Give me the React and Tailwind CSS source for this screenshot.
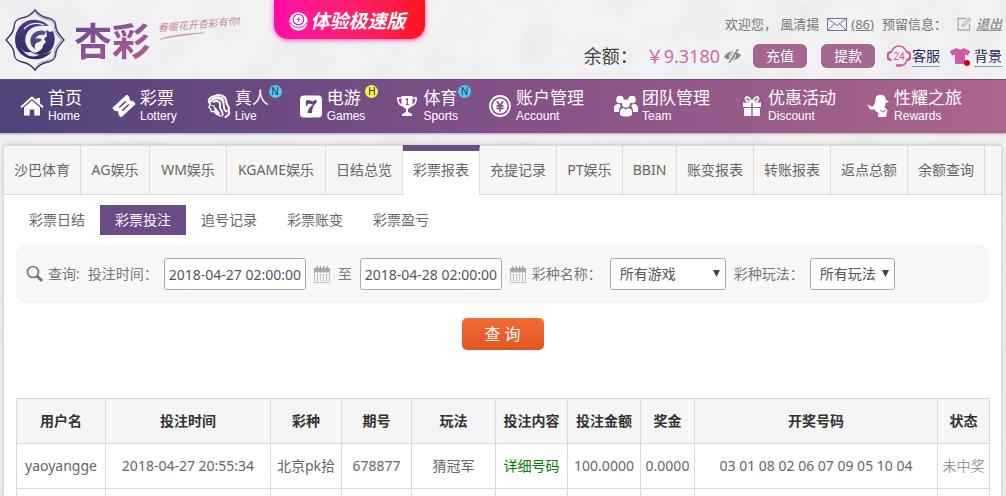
import React from "react";
import { FaTshirt } from "react-icons/fa";

const FlowerLogo = () => (
  <svg width="62" height="64" viewBox="0 0 62 64" fill="none" aria-hidden="true">
    <defs>
      <linearGradient id="emblem" x1="0" y1="0" x2="0" y2="1">
        <stop offset="0" stopColor="#4f3a80" />
        <stop offset="1" stopColor="#2f2b62" />
      </linearGradient>
    </defs>
    <path
      d="M31 2C34 6 38 9 44 10C50 11 52 14 52 20C53 25 56 28 60 32C56 36 53 39 52 44C52 50 50 53 44 54C38 55 34 58 31 62C28 58 24 55 18 54C12 53 10 50 10 44C9 39 6 36 2 32C6 28 9 25 10 20C10 14 12 11 18 10C24 9 28 6 31 2Z"
      stroke="url(#emblem)"
      strokeWidth="1.4"
    />
    <path
      d="M31 4.500C34 8 38 10.500 43 11.500C49 12.500 50.500 15 50.500 20.500C51 25 54 28.500 57.500 32C54 35.500 51 39 50.500 43.500C50.500 49 49 51.500 43 52.500C38 53.500 34 56 31 59.500"
      stroke="#6a5a92"
      strokeWidth=".6"
    />
    <path
      d="M45 18C37 10 24 10 17 17C9 25 9 39 17 46C26 54 41 53 48 43C40 48 29 47 24 40C19 33 21 24 28 20C34 17 40 18 45 18Z"
      fill="url(#emblem)"
    />
    <path d="M20 21C25 15 34 14 40 17" stroke="#eeeef2" strokeWidth="1.2" />
    <path d="M28 27C31 23 37 21 42 24L40 27C36 26 33 28 31 31C33 30 36 30 38 32L35 34C32 34 30 37 31 41C26 38 25 32 28 27Z" fill="url(#emblem)" opacity=".9" />
    <path d="M42 22L46 24L49 23C52 30 51 38 46 43C41 47 35 47 31 45C36 43 39 41 39 37L42 34L40 31L43 28Z" fill="url(#emblem)" />
    <path d="M17 39C19 44 23 45 26 44C29 44 31 48 36 46C32 50 21 50 17 39Z" fill="#e9e7f0" />
  </svg>
);

const HomeIcon = () => (
  <svg width="24" height="24" viewBox="0 0 24 24" fill="#fff" aria-hidden="true">
    <path d="M12 2.200L16.500 6.200V4H20V9.300L23.600 12.600L22.400 14L12 4.900L1.600 14L.4 12.600Z" />
    <path d="M12 6.400L20 13.400V21.500H14.300V15.500H9.700V21.500H4V13.400Z" />
  </svg>
);

const TicketIcon = () => (
  <svg width="24" height="24" viewBox="0 0 24 24" aria-hidden="true">
    <g transform="rotate(-43 12 12)">
      <path d="M2 5.500H22V9.700A2.400 2.400 0 0 0 22 14.300V18.500H2V14.300A2.400 2.400 0 0 0 2 9.700Z" fill="#fff" />
      <path d="M7.500 9.800H16.500M7.500 14.200H16.500" stroke="#56447c" strokeWidth="1.500" />
    </g>
  </svg>
);

const LadyIcon = () => (
  <svg width="26" height="26" viewBox="0 0 26 26" fill="none" stroke="#fff" strokeLinecap="round" aria-hidden="true">
    <path d="M3 10C0 6 4 3 8 2.500C14-.5 21 2 21 9C21 13 26 14 23 18C26 21 22 24 20 25" strokeWidth="2.200" />
    <path d="M4 8C8 3 15 4 17 8C20 13 16 16 21 19M7 8.500C12 6 15 9 14 13C13 17 18 18 17 23M6 5C11 2 18 3 18 9" strokeWidth="2" />
    <path d="M3.500 11L2 14.500L4 16L4.500 19L8 19L10 22L15 24" strokeWidth="1.500" />
    <path d="M8 14C11 16 11 19 14 21C12 23 9 22 9 19Z" fill="#fff" strokeWidth="1" />
    <path d="M5 12.500L8 13" strokeWidth="1.200" />
  </svg>
);

const SevenIcon = () => (
  <svg width="24" height="24" viewBox="0 0 24 24" aria-hidden="true">
    <rect x="1" y="1.500" width="22" height="22" rx="4" fill="#fff" />
    <path d="M7 6.500L8 6.500C10 5 12 8 14.500 7C15.500 6.600 16 6 16.500 5.800H17.500V8.500C14 12 13 15 13 19H8.500C8.500 15.500 11 12.500 14.500 10C12 11 10.500 8.800 8.500 10.500L8 12H6.800Z" fill="#68447f" />
  </svg>
);

const TrophyIcon = () => (
  <svg width="24" height="24" viewBox="0 0 24 24" fill="none" aria-hidden="true">
    <path d="M6.500 2H17.500V8C17.500 12 15.500 14.500 12 15C8.500 14.500 6.500 12 6.500 8Z" fill="#fff" />
    <path d="M6.500 4H2.800C2.800 9 5 11 8 11.800M17.500 4H21.200C21.200 9 19 11 16 11.800" stroke="#fff" strokeWidth="1.700" />
    <path d="M11 14H13V18L17 20V22H7V20L11 18Z" fill="#fff" />
    <path d="M10.800 5.800L12.300 4.800V10.500M10.800 10.500H13.800" stroke="#7b4d86" strokeWidth="1.200" />
  </svg>
);

const YuanIcon = () => (
  <svg width="24" height="24" viewBox="0 0 24 24" fill="none" aria-hidden="true">
    <circle cx="12" cy="12" r="10" stroke="#fff" strokeWidth="1.800" />
    <circle cx="12" cy="12" r="7.500" fill="#fff" />
    <path d="M8.700 7.300L12 11.300L15.300 7.300M8.500 11.800H15.500M8.500 14.300H15.500M12 11V17.500" stroke="#80508a" strokeWidth="1.700" />
  </svg>
);

const TeamIcon = () => (
  <svg className="shrink-0" width="26" height="24" viewBox="0 0 26 24" fill="#fff" aria-hidden="true">
    <circle cx="7" cy="5.500" r="3.800" />
    <circle cx="19" cy="5.500" r="3.800" />
    <path d="M1 18V14C1 11 3 10 6 10L8 12C6.500 13.500 6 15 6 18ZM25 18V14C25 11 23 10 20 10L18 12C19.500 13.500 20 15 20 18Z" />
    <circle cx="13" cy="9.500" r="4" />
    <path d="M7 21V18C7 15.500 8.500 14.300 10.500 14L13 15.500L15.500 14C17.500 14.300 19 15.500 19 18V21C16 23 10 23 7 21Z" />
  </svg>
);

const GiftIcon = () => (
  <svg width="24" height="24" viewBox="0 0 24 24" fill="#fff" aria-hidden="true">
    <path d="M3 8.500H11.300V13H3ZM12.700 8.500H21V13H12.700ZM4 14H11.300V22H4ZM12.700 14H20V22H12.700Z" />
    <path d="M11.500 8C5 8 4 3 7 3C9.500 3 10.500 5.500 12 8C13.500 5.500 14.500 3 17 3C20 3 19 8 12.500 8" fill="none" stroke="#fff" strokeWidth="1.600" />
  </svg>
);

const RewardIcon = () => (
  <svg width="24" height="26" viewBox="0 0 24 26" fill="#fff" aria-hidden="true">
    <path d="M10 4C12 1 18 1 19 4L20 7L23 9L19.500 10C20 12 19 13 18 14L21.500 17L20 24H12L12.500 20C10 19 8.500 17 8 16C5 18 3 16 2.500 13.500L1 11.500L4 12.500C5 14 6.500 14 8 12C9.500 10.500 9 7 10 4Z" />
    <path d="M14 17L17 19L20 17" fill="none" stroke="#a06290" strokeWidth="1" />
  </svg>
);

const navItems = [
  { zh: "首页", en: "Home", Icon: HomeIcon },
  { zh: "彩票", en: "Lottery", Icon: TicketIcon },
  { zh: "真人", en: "Live", Icon: LadyIcon, badge: "N" },
  { zh: "电游", en: "Games", Icon: SevenIcon, badge: "H" },
  { zh: "体育", en: "Sports", Icon: TrophyIcon, badge: "N" },
  { zh: "账户管理", en: "Account", Icon: YuanIcon },
  { zh: "团队管理", en: "Team", Icon: TeamIcon },
  { zh: "优惠活动", en: "Discount", Icon: GiftIcon },
  { zh: "性耀之旅", en: "Rewards", Icon: RewardIcon },
];

const tabs = [
  ["沙巴体育", "min-w-[77px]"],
  ["AG娱乐", "min-w-[69px]"],
  ["WM娱乐", "min-w-[77px]"],
  ["KGAME娱乐", "min-w-[99px]"],
  ["日结总览", "min-w-[77px]"],
  ["彩票报表", "min-w-[77px]"],
  ["充提记录", "min-w-[77px]"],
  ["PT娱乐", "min-w-[66px]"],
  ["BBIN", "min-w-[54px]"],
  ["账变报表", "min-w-[77px]"],
  ["转账报表", "min-w-[77px]"],
  ["返点总额", "min-w-[77px]"],
  ["余额查询", "min-w-[77px]"],
];
const subTabs = ["彩票日结", "彩票投注", "追号记录", "彩票账变", "彩票盈亏"];

const columns = [
  ["用户名", "w-[89px]"],
  ["投注时间", "w-[165px]"],
  ["彩种", "w-[71px]"],
  ["期号", "w-[70px]"],
  ["玩法", "w-[84px]"],
  ["投注内容", "w-[72px]"],
  ["投注金额", "w-[73px]"],
  ["奖金", "w-[54px]"],
  ["开奖号码", "w-[243px]"],
  ["状态", "w-[52px]"],
];
const row = ["yaoyangge", "2018-04-27 20:55:34", "北京pk拾", "678877", "猜冠军", "详细号码", "100.0000", "0.0000", "03 01 08 02 06 07 09 05 10 04", "未中奖"];

const CalendarIcon = () => (
  <svg width="16" height="17" viewBox="0 0 16 17" fill="none" aria-hidden="true">
    <path d="M.5 2.500H15.500V16.500H.5Z" fill="#f4f4f4" stroke="#c4c4c4" />
    <path d="M0 2H16V6.500H0Z" fill="#aaa" />
    <path d="M3 0V4M6.300 0V4M9.700 0V4M13 0V4" stroke="#999" strokeWidth="1.200" />
    <path d="M3.500 8V15M6.500 8V15M9.500 8V15M12.500 8V15" stroke="#b4b4b4" />
    <path d="M2 10.500H14M2 13H14" stroke="#f4f4f4" strokeWidth=".6" />
  </svg>
);

const DateField = ({ id, value, label }) => (
  <span className="flex items-center gap-2">
    <input
      id={id}
      aria-label={label}
      defaultValue={value}
      className="h-8 w-[142px] rounded-[3px] border border-[#aaa] bg-white px-1 text-sm text-[#555]"
    />
    <button type="button" aria-label="日历"><CalendarIcon /></button>
  </span>
);

const SelectField = ({ id, option, width }) => (
  <span className={"relative " + width}>
    <select id={id} className="h-8 w-full appearance-none rounded-[3px] border border-[#aaa] bg-white px-[9px] text-sm text-[#555]">
      <option>{option}</option>
    </select>
    <svg className="pointer-events-none absolute top-3 right-[6px]" width="7" height="7" viewBox="0 0 7 7" aria-hidden="true">
      <path d="M0 0H7L3.500 7Z" fill="#444" />
    </svg>
  </span>
);

function Header() {
  return (
    <header className="flex h-[79px] items-start">
      <div className="flex w-[274px] shrink-0 items-start pt-2 pl-1">
        <FlowerLogo />
        <div className="ml-2 flex h-16 items-center bg-gradient-to-br from-[#5d4490] via-[#8f5496] to-[#b9608f] bg-clip-text text-[38px] leading-none font-bold text-transparent">
          杏彩
        </div>
        <div className="mt-2 ml-2 -rotate-5">
          <div className="text-[10px] leading-4 whitespace-nowrap text-[#c58a9c] italic">春暖花开杏彩有你!</div>
          <svg width="46" height="5" viewBox="0 0 46 5" aria-hidden="true">
            <path d="M1 4C12 0 28 1 45 1C28 2 14 2 1 4Z" fill="#c99aa8" stroke="#c99aa8" strokeWidth=".5" />
          </svg>
        </div>
      </div>
      <button type="button" className="flex h-[39px] w-[151px] shrink-0 items-center justify-center gap-0.5 rounded-b-[14px] bg-gradient-to-r from-[#ff0aa8] to-[#ff1410] pt-1 pr-1 text-[19px] font-bold text-white italic shadow-[0_1px_5px_#ff50c0]">
        <svg width="19" height="19" viewBox="0 0 19 19" aria-hidden="true">
          <circle cx="9.500" cy="9.500" r="9.200" fill="#fff" />
          <circle cx="9.500" cy="7.500" r="5.300" fill="none" stroke="#f21a9c" strokeWidth="1.100" />
          <path d="M10.500 4L7.500 8H9.500L8.500 11L11.500 7H9.500Z" fill="#f21a9c" />
          <path d="M1 10Q3 15 9.500 15.500Q16 15 18 10" fill="none" stroke="#f21a9c" strokeWidth="1" />
        </svg>
        <span>体验极速版</span>
      </button>
      <div className="ml-auto flex flex-col items-end pt-3 pr-1 whitespace-nowrap">
        <div className="flex h-6 items-center text-[13px] text-[#777]">
          <span>欢迎您， 風清揚</span>
          <svg className="ml-2" width="20" height="13" viewBox="0 0 20 13" fill="none" stroke="#7776a0" aria-hidden="true">
            <path d="M.5.5H19.500V12.500H.5ZM.5.5L10 7.500L19.500.5M.5 12.500L7.500 5.800M19.500 12.500L12.500 5.800" />
          </svg>
          <a href="#mail" className="ml-1 underline">(86)</a>
          <span className="ml-2">预留信息：</span>
          <svg className="ml-[10px]" width="15" height="14" viewBox="0 0 15 14" fill="none" stroke="#aaa" aria-hidden="true">
            <path d="M9 1.500H1V13H12.500V6.500" strokeWidth="1.300" />
            <path d="M5 9.500L5.800 7L12 .8L14 2.600L7.600 8.800Z" fill="#ddd" />
          </svg>
          <a href="#logout" className="ml-1 font-bold text-[#999] italic underline">退出</a>
        </div>
        <div className="flex h-10 items-center text-sm">
          <span className="text-lg text-[#444]">余额：</span>
          <span className="ml-2 text-lg text-[#cf69a5]">￥9.3180</span>
          <svg className="ml-1" width="17" height="14" viewBox="0 0 17 14" fill="none" aria-hidden="true">
            <path d="M0 8C3 2 11 1 17 6C14 12 5 13 0 8Z" fill="#888" />
            <circle cx="8.500" cy="7" r="3" stroke="#eee" />
            <path d="M13 0L4 14" stroke="#eee" strokeWidth="3" />
            <path d="M14 0L5 14" stroke="#888" strokeWidth="1.500" />
          </svg>
          <button type="button" className="ml-3 h-6 w-[54px] rounded-md bg-[#a5668f] text-sm text-white">充值</button>
          <button type="button" className="ml-[14px] h-6 w-[54px] rounded-md bg-[#a5668f] text-sm text-white">提款</button>
          <svg className="ml-3" width="24" height="24" viewBox="0 0 24 24" fill="none" stroke="#c75aa5" aria-hidden="true">
            <path d="M4.500 8C6 4 8.500 2 12 2S18 4 19.500 8M20 16C19 20 16 21.500 13 21.500" strokeWidth="1.500" />
            <path d="M4.500 8A4 4 0 0 0 4.500 16M19.500 8A4 4 0 0 1 19.500 16" strokeWidth="2.500" />
            <path d="M10 21.500H13.500" strokeWidth="2.500" strokeLinecap="round" />
            <path d="M7 9.500Q11 7 11 10.500Q10.500 12 7 15.500H11.500M16 16V8.500L12.500 13.500H17.500" />
          </svg>
          <a href="#service" className="ml-px border-b border-[#999] leading-5 text-[#29265f]">客服</a>
          <span className="relative ml-[10px]">
            <FaTshirt size={20} color="#d05aa8" aria-hidden="true" />
            <span className="absolute right-0 bottom-0 size-[6px] rounded-full bg-[#d40018]" />
          </span>
          <a href="#background" className="ml-1 border-b border-[#999] leading-5 text-[#29265f]">背景</a>
        </div>
      </div>
    </header>
  );
}

export default function App() {
  return (
    <div className="relative isolate h-screen overflow-hidden bg-[#f2f2f2] font-['Noto_Sans','Noto_Sans_CJK_SC',sans-serif] text-sm text-[#666]">
      <svg className="absolute inset-0 -z-10 size-full opacity-10" aria-hidden="true">
        <filter id="marble">
          <feTurbulence type="fractalNoise" baseFrequency=".025" numOctaves="4" seed="8" />
          <feColorMatrix values="0 0 0 0 .5  0 0 0 0 .5  0 0 0 0 .5  2.500 0 0 0 -1" />
        </filter>
        <rect width="100%" height="100%" filter="url(#marble)" />
      </svg>
      <Header />
      <nav className="flex h-[54px] items-center gap-[30px] bg-gradient-to-r from-[#50437a] via-[#835088] to-[#ad668b] pl-5 font-['Liberation_Sans','Noto_Sans_CJK_SC',sans-serif] text-white shadow-[inset_0_1px_0_#66517a,0_1px_2px_#aaa]">
        {navItems.map(({ zh, en, Icon, badge }) => (
          <a key={en} href={"#" + en.toLowerCase()} className="relative flex shrink-0 items-center gap-1">
            <span className="flex w-6 justify-center"><Icon /></span>
            <span className="flex flex-col">
              <span className="text-[17px] leading-5">{zh}</span>
              <span className="text-xs leading-[14px]">{en}</span>
            </span>
            {badge && (
              <span
                className={
                  "absolute -top-1 left-full flex size-[13px] items-center justify-center rounded-full text-[10px] leading-none text-[#283060] " +
                  (badge === "N" ? "bg-[#4fc8f0]" : "bg-[#f6f63c]")
                }
              >
                {badge}
              </span>
            )}
          </a>
        ))}
      </nav>

      <main className="mt-3 mr-[5px] ml-1 h-full bg-white shadow-[0_0_5px_#bbb]">
        <div className="flex h-[50px] border-t border-b border-[#d9d9d9] bg-[#f7f6f4]">
          {tabs.map(([t, w]) => (
            <a
              key={t}
              href="#tab"
              className={
                w +
                (t === "彩票报表"
                  ? " -my-px flex items-center justify-center border-t-6 border-r border-t-[#6a4c86] border-r-[#ddd] bg-white pb-[6px]"
                  : " flex items-center justify-center border-r border-[#ddd]")
              }
            >
              {t}
            </a>
          ))}
        </div>
        <div className="mt-[10px] flex px-[10px]">
          {subTabs.map((t) => (
            <a
              key={t}
              href="#sub"
              className={"flex h-[30px] items-center px-[15px] " + (t === "彩票投注" ? "bg-[#6a4c86] text-white" : "")}
            >
              {t}
            </a>
          ))}
        </div>

        <form className="px-3" onSubmit={(e) => e.preventDefault()}>
          <div className="mt-[10px] flex h-[58px] items-center rounded-[10px] border border-[#f3f3f3] bg-[#f7f7f7] pl-[9px] whitespace-nowrap text-[#777]">
            <svg width="18" height="18" viewBox="0 0 18 18" fill="none" stroke="#777" aria-hidden="true">
              <circle cx="7" cy="7" r="5.500" strokeWidth="1.700" />
              <path d="M11 11L16 16" strokeWidth="3" />
            </svg>
            <span className="ml-1">查询:</span>
            <label htmlFor="from" className="ml-2">投注时间：</label>
            <span className="ml-[6px]"><DateField id="from" label="投注时间" value="2018-04-27 02:00:00" /></span>
            <label htmlFor="to" className="mx-2">至</label>
            <DateField id="to" label="至" value="2018-04-28 02:00:00" />
            <label htmlFor="game" className="mr-2 ml-[6px]">彩种名称：</label>
            <SelectField id="game" option="所有游戏" width="w-[116px]" />
            <label htmlFor="play" className="mr-[6px] ml-2">彩种玩法：</label>
            <SelectField id="play" option="所有玩法" width="w-[85px]" />
          </div>
          <div className="mt-[15px] flex justify-center">
            <button type="submit" className="h-8 w-[82px] rounded-[5px] bg-gradient-to-b from-[#f36b35] to-[#e25520] text-base text-white">查 询</button>
          </div>
        </form>

        <div className="mt-12 px-3">
          <table className="w-full table-fixed border-collapse text-center whitespace-nowrap">
            <thead>
              <tr className="h-[45px] bg-[#f5f5f5] text-[#333]">
                {columns.map(([name, w]) => (
                  <th key={name} className={"border border-[#d9d9d9] p-0 font-bold " + w}>{name}</th>
                ))}
              </tr>
            </thead>
            <tbody>
              <tr className="h-[45px]">
                {row.map((v, i) => (
                  <td key={v} className={"border border-[#d9d9d9] p-0 " + (i === 9 ? "text-[#999]" : "")}>
                    {i === 5 ? <a href="#detail" className="text-[#008000]">{v}</a> : v}
                  </td>
                ))}
              </tr>
              <tr className="h-[45px]">
                {row.map((v) => (
                  <td key={v} className="border border-[#d9d9d9]" />
                ))}
              </tr>
            </tbody>
          </table>
        </div>
      </main>
    </div>
  );
}
